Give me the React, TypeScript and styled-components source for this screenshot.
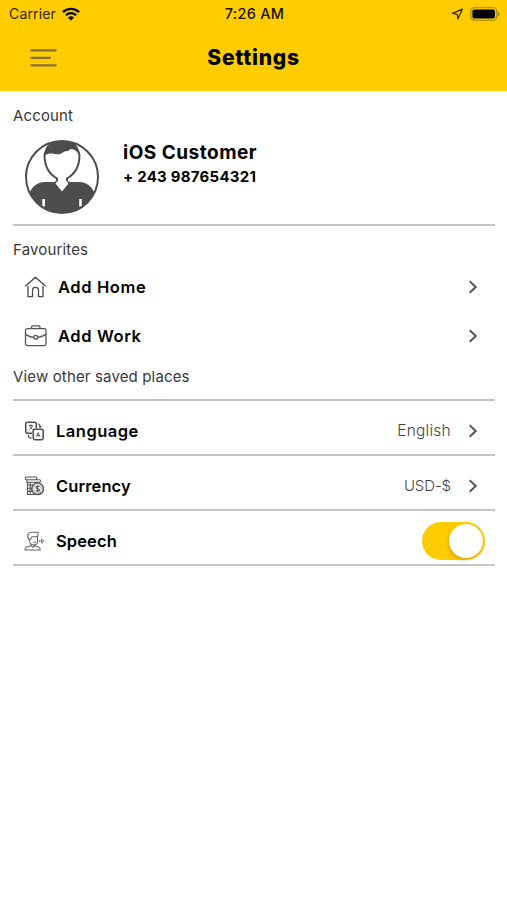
import React, { useState } from "react";
import styled, { createGlobalStyle } from "styled-components";

const Global = createGlobalStyle`
  * { box-sizing: border-box; }
  body { margin: 0; background: #fff; font-family: Inter, "Open Sans", sans-serif; color: #000; }
  button { border: 0; padding: 0; margin: 0; background: none; font: inherit; color: inherit; cursor: pointer; }
  svg { display: block; flex: none; }
`;

const Screen = styled.main`
  width: 507px;
  height: 900px;
  background: #fff;
  overflow: hidden;
`;

const Header = styled.header`
  height: 91px;
  background: #ffcc00;
`;

const StatusBar = styled.div`
  height: 27px;
  padding: 0 7px 0 9px;
  display: grid;
  grid-template-columns: 1fr auto 1fr;
  align-items: center;
  font-size: 14px;
  color: #1c1700;
`;

const StatusSide = styled.div<{ $end?: boolean }>`
  display: flex;
  align-items: center;
  gap: ${(p) => (p.$end ? 7 : 6)}px;
  justify-content: ${(p) => (p.$end ? "flex-end" : "flex-start")};
`;

const Text = styled.span<{ $size: number; $weight?: number; $track?: number; $color?: string }>`
  margin: 0;
  font-size: ${(p) => p.$size}px;
  font-weight: ${(p) => p.$weight ?? 400};
  letter-spacing: ${(p) => p.$track ?? 0}px;
  color: ${(p) => p.$color ?? "#000"};
  line-height: 24px;
  white-space: nowrap;
`;

const NavBar = styled.div`
  height: 62px;
  padding: 0 30px;
  display: grid;
  grid-template-columns: 1fr auto 1fr;
  align-items: center;
`;

const Content = styled.div`
  padding: 0 12px 0 13px;
`;

const Section = styled.section<{ $height: number }>`
  height: ${(p) => p.$height}px;
  border-bottom: 2px solid #c5c5c5;
`;

const Label = styled.h2<{ $top?: number }>`
  margin: 0;
  padding-top: ${(p) => p.$top ?? 0}px;
  font-size: 15px;
  font-weight: 400;
  letter-spacing: 0.15px;
  line-height: 24px;
  color: #383838;
`;

const Profile = styled.div`
  display: flex;
  gap: 23px;
  padding: 11px 0 0 11px;
`;

const ProfileText = styled.div`
  display: flex;
  flex-direction: column;
  padding-top: 2px;
`;

const Row = styled.div<{ $height: number; $line?: boolean; $gap: number }>`
  height: ${(p) => p.$height}px;
  padding: ${(p) => (p.$line ? 7 : 0)}px 10px 0 11px;
  display: flex;
  align-items: center;
  gap: ${(p) => p.$gap}px;
  border-bottom: ${(p) => (p.$line ? "2px solid #c5c5c5" : "0")};
`;

const Trailing = styled.div`
  margin-left: auto;
  display: flex;
  align-items: center;
  gap: 14px;
`;

const Switch = styled.button<{ $on: boolean }>`
  width: 63px;
  height: 38px;
  padding: 2px;
  border-radius: 19px;
  display: flex;
  justify-content: ${(p) => (p.$on ? "flex-end" : "flex-start")};
  background: ${(p) => (p.$on ? "#ffcc00" : "#ddd")};
`;

const Knob = styled.span`
  width: 34px;
  height: 34px;
  border-radius: 50%;
  background: #fff;
  box-shadow: -1px 2px 4px rgba(120, 80, 0, 0.28);
`;

const Wifi = () => (
  <svg width="18" height="14" viewBox="0 0 18 14" fill="none" stroke="#080600" strokeWidth="2.3">
    <path d="M.9 5.1a11.6 11.6 0 0 1 16.2 0" />
    <path d="M3.9 8.3a7.3 7.3 0 0 1 10.2 0" />
    <path d="M9 13.6 6 10.7a4.3 4.3 0 0 1 6 0z" fill="#080600" stroke="none" />
  </svg>
);

const LocationArrow = () => (
  <svg width="12" height="12" viewBox="0 0 12 12" fill="none" stroke="#3a2f00" strokeWidth="1.3" strokeLinejoin="round">
    <path d="M11.300 1.200 1.500 5.400l4.800.9.700 4.500z" />
  </svg>
);

const Battery = () => (
  <svg width="30" height="14" viewBox="0 0 30 14">
    <rect x=".8" y=".8" width="26" height="12.4" rx="3.6" fill="none" stroke="#a38300" strokeWidth="1.1" />
    <rect x="2.4" y="2.4" width="22.6" height="9.2" rx="2" fill="#000" />
    <path d="M28 4.7c2 .8 2 3.8 0 4.6z" fill="#a38300" />
  </svg>
);

const Menu = () => (
  <svg width="27" height="20" viewBox="0 0 27 20" stroke="#85733a" strokeWidth="2.2" strokeLinecap="round">
    <path d="M1.3 2.3h24.4M1.3 9.8h18.6M1.3 17.3h24.4" />
  </svg>
);

const Avatar = () => (
  <svg width="76" height="76" viewBox="0 0 76 76">
    <defs>
      <clipPath id="disc"><circle cx="38" cy="38" r="36" /></clipPath>
    </defs>
    <g clipPath="url(#disc)">
      <path d="M4 60c2-11 7-16 16-17h8c4 0 5-1 5-3h10c0 2 1 3 5 3h8c9 1 14 6 16 17v18H4z" fill="#4d4d4d" />
      <path d="M33.500 34v8l-2 2.500 6.500 8 6.500-8-2-2.500v-8z" fill="#fff" />
      <path d="M33 42v-2.500C25 35 20.500 27 20.500 16 22 3 54 3 55.500 16c0 11-4.500 19-12.500 23.500V42" fill="#fff" stroke="#4d4d4d" strokeWidth="2" />
      <path d="M20.500 17C20 5 29 1 38 1s18 4 17.500 16c-2-5-5-6.500-9-7-3 3.500-5 1-7.500 3.500-4 3-7 1.500-11 1-4-.4-6 .5-7.500 2.500z" fill="#4d4d4d" />
      <path d="M18.300 60h2.600v7.500h-2.600zM55.200 60h2.600v7.500h-2.600z" fill="#fff" />
    </g>
    <circle cx="38" cy="38" r="36" fill="none" stroke="#4d4d4d" strokeWidth="2" />
  </svg>
);

const Home = () => (
  <svg width="22" height="22" viewBox="0 0 22 22" fill="none" stroke="#4a4a4a" strokeWidth="1.3" strokeLinecap="round" strokeLinejoin="round">
    <path d="M1.800 9.800 11.500 1.200l9.700 8.600M4 10.500v10.100h4.500v-6.500c0-3.600 6-3.600 6 0v6.500H19v-10.100" />
  </svg>
);

const Briefcase = () => (
  <svg width="23" height="22" viewBox="0 0 23 22" fill="none" stroke="#555" strokeWidth="1.3" strokeLinejoin="round">
    <rect x="1.500" y="3.600" width="20.500" height="17" rx="1.800" />
    <path d="M7.500 3.600V2.300q0-1.500 1.500-1.500h5.500q1.500 0 1.500 1.500v1.300M1.500 9c1.400 1.800 4 2.600 8.200 3.300M22 9c-1.400 1.800-4 2.600-8.400 3.300" />
    <circle cx="11.700" cy="12.300" r="1.900" />
  </svg>
);

const LanguageIcon = () => (
  <svg width="20" height="20" viewBox="0 0 20 20" fill="none" stroke="#4b4b4b" strokeWidth="1.500" strokeLinejoin="round">
    <path d="M8.300 12.200H3.600Q1.700 12.200 1.700 10.300V3Q1.700 1.200 3.600 1.200h6.800Q12.300 1.200 12.300 3v4.300" />
    <rect x="9.200" y="8.200" width="10" height="10.500" rx="1.600" />
    <path d="M5 4.500h4M7 3.500v1M5.300 8.500C7.300 7.500 8 6 8.200 4.500M5.800 5.500 8.500 8.500M12.500 15.800l1.700-4.300 1.700 4.300M13.100 14.500h2.200" strokeWidth=".9" />
    <path d="M13.800 2.700q2.400.3 2.400 3.500M15 5l1.200 1.300L17.400 5M4 13.600q.3 3.500 3.600 3.500" strokeWidth="1.100" />
  </svg>
);

const CurrencyIcon = () => (
  <svg width="20" height="20" viewBox="0 0 20 20" fill="none" stroke="#555" strokeWidth="1.100">
    <rect x="1.300" y="1" width="11.500" height="2.700" rx="1" />
    <path d="M3 3.700v2.500h12.500q1 0 1-1.200t-1-1.300h-3M3.500 6.200v12.300h7M3.500 9h6M3.500 12.200h5M3.500 15.400h5M6.200 6.200v12.300" />
    <circle cx="13.600" cy="12.800" r="5.800" fill="#fff" strokeWidth="1.500" />
    <circle cx="13.600" cy="12.800" r="3.900" strokeWidth=".4" />
    <path d="M15.400 11c-.8-1-3.400-1-3.400.4 0 1.700 3.500.9 3.500 2.700 0 1.500-2.900 1.500-3.700.3M13.700 9.600v6.400" />
  </svg>
);

const SpeechIcon = () => (
  <svg width="20" height="20" viewBox="0 0 20 20" fill="none" stroke="#686868" strokeWidth="1.100" strokeLinejoin="round">
    <path d="M4.800 8.300C2 3.500 5 1 8.500 1.200H14v2.500q0 2-2 2H8L6.800 8.300z" />
    <path d="M5.500 8v2.500q.5 3 4 3.400 4 0 4-3.500V4.700M7 13v1.700L2.500 16Q1 16.500 1 19h15.200q0-2.500-1.500-3L11 14.700V13.300M7 14.700l2.200 1.600 1.800-1.600M9.500 11.200h2.500" />
    <path d="M15.800 9v2" />
    <path d="M17.800 7.800v4.600" strokeWidth="1.300" />
    <path d="M19.500 9.300v1.500" />
  </svg>
);

const Chevron = () => (
  <svg width="20" height="16" viewBox="0 0 20 16" fill="none" stroke="#555" strokeWidth="2">
    <path d="M4.700 2.300 10.700 8l-6 5.700" />
  </svg>
);

export default function App() {
  const [speech, setSpeech] = useState(true);
  return (
    <>
      <Global />
      <Screen>
        <Header>
          <StatusBar>
            <StatusSide>
              <Text $size={14} $track={0.15} $color="#302700">Carrier</Text>
              <Wifi />
            </StatusSide>
            <Text $size={14.5} $weight={500} $track={0.3} $color="#171200">7:26 AM</Text>
            <StatusSide $end>
              <LocationArrow />
              <Battery />
            </StatusSide>
          </StatusBar>
          <NavBar>
            <button aria-label="Menu"><Menu /></button>
            <Text as="h1" $size={21} $weight={800} $track={0.75}>Settings</Text>
          </NavBar>
        </Header>
        <Content>
          <Section $height={135}>
            <Label $top={13}>Account</Label>
            <Profile>
              <Avatar />
              <ProfileText>
                <Text $size={19} $weight={700} $track={0.5}>iOS Customer</Text>
                <Text $size={15} $weight={700} $track={0.25}>+ 243 987654321</Text>
              </ProfileText>
            </Profile>
          </Section>
          <Section $height={175}>
            <Label $top={12}>Favourites</Label>
            <Row $height={49} $gap={12}>
              <Home />
              <Text $size={16.5} $weight={600} $track={0.6}>Add Home</Text>
              <Trailing><Chevron /></Trailing>
            </Row>
            <Row $height={49} $gap={11}>
              <Briefcase />
              <Text $size={16.5} $weight={600} $track={0.6}>Add Work</Text>
              <Trailing><Chevron /></Trailing>
            </Row>
            <Label $top={5}>View other saved places</Label>
          </Section>
          <Row $height={55} $gap={12} $line>
            <LanguageIcon />
            <Text $size={16.5} $weight={600} $track={0.5}>Language</Text>
            <Trailing>
              <Text $size={15.5} $weight={300} $track={0.25} $color="#444">English</Text>
              <Chevron />
            </Trailing>
          </Row>
          <Row $height={55} $gap={12} $line>
            <CurrencyIcon />
            <Text $size={16.5} $weight={600} $track={0.1}>Currency</Text>
            <Trailing>
              <Text $size={15} $weight={300} $track={-0.1} $color="#444">USD-$</Text>
              <Chevron />
            </Trailing>
          </Row>
          <Row $height={55} $gap={12} $line>
            <SpeechIcon />
            <Text $size={16.5} $weight={600} $track={0.1}>Speech</Text>
            <Trailing>
              <Switch $on={speech} role="switch" aria-checked={speech} aria-label="Speech" onClick={() => setSpeech(!speech)}>
                <Knob />
              </Switch>
            </Trailing>
          </Row>
        </Content>
      </Screen>
    </>
  );
}
